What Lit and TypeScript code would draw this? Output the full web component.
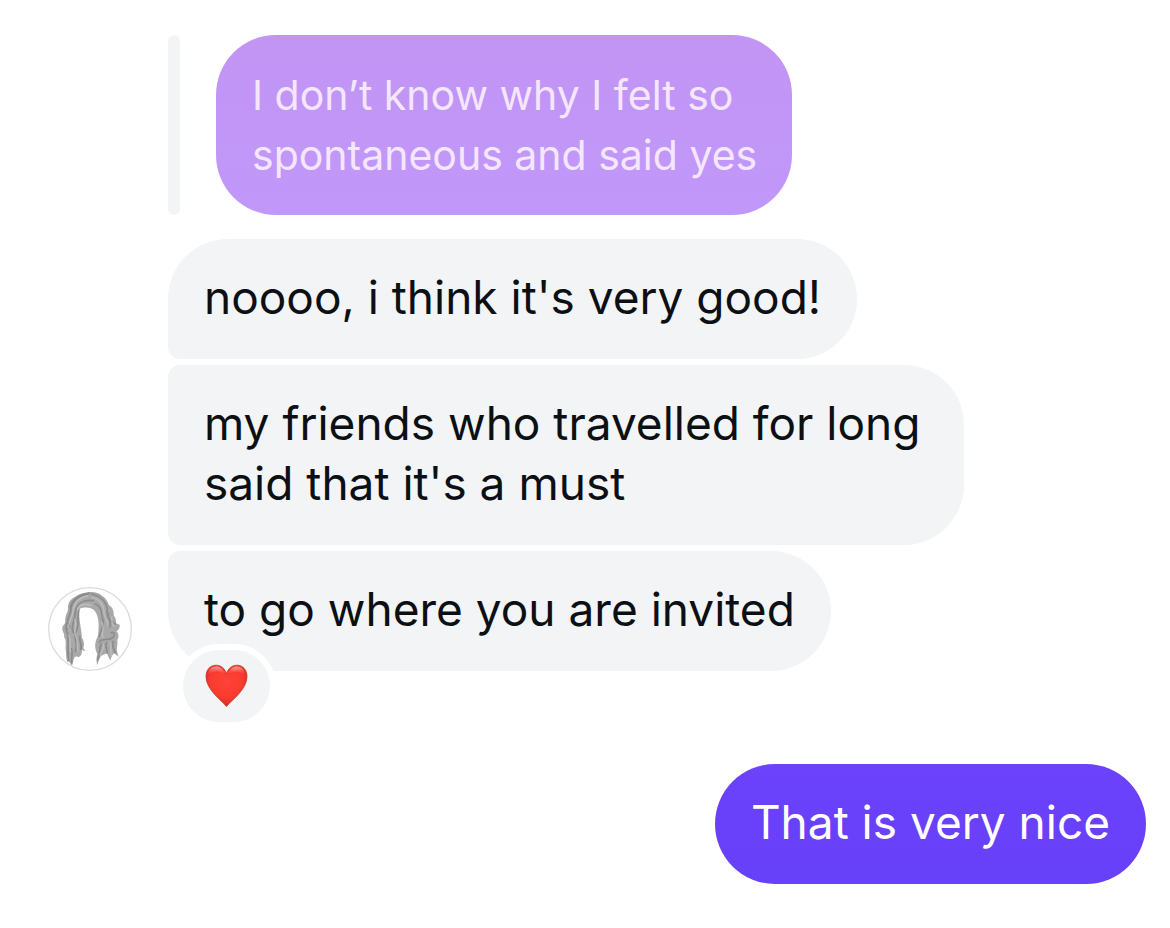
import { LitElement, html, css, svg } from "lit";
import { customElement, property } from "lit/decorators.js";

type Shape = "first" | "middle" | "last" | "single";

@customElement("chat-bubble")
class ChatBubble extends LitElement {
  @property({ reflect: true }) tone: "received" | "sent" | "quoted" = "received";
  @property({ reflect: true }) shape: Shape = "single";

  static styles = css`
    :host {
      display: block;
      box-sizing: border-box;
      position: relative;
      width: fit-content;
      padding: 28px 36px 32px;
      border-radius: 60px;
      font-size: 46px;
      line-height: 60px;
      color: #0c1014;
      background: #f2f4f6;
    }
    :host([shape="first"]) { border-bottom-left-radius: 12px; }
    :host([shape="middle"]) {
      border-top-left-radius: 12px;
      border-bottom-left-radius: 12px;
    }
    :host([shape="last"]) { border-top-left-radius: 12px; }
    :host([tone="sent"]) {
      color: #ffffff;
      background: linear-gradient(#6c42fc, #6740f9);
    }
    :host([tone="quoted"]) {
      padding: 30px 24px 30px 36px;
      font-size: 41px;
      color: #f4e6fd;
      background: linear-gradient(#c294f4, #c098fa);
    }
    .text { margin: 0; }
  `;

  render() {
    return html`<p class="text"><slot></slot></p><slot name="reaction"></slot>`;
  }
}

@customElement("heart-reaction")
class HeartReaction extends LitElement {
  static styles = css`
    :host {
      position: absolute;
      left: 9px;
      bottom: -57px;
    }
    .pill {
      display: flex;
      align-items: center;
      justify-content: center;
      width: 99px;
      height: 84px;
      padding: 0;
      border: 6px solid #ffffff;
      border-radius: 42px;
      background: #f2f4f6;
    }
    svg { width: 44px; height: 44px; }
  `;

  render() {
    return html`
      <button class="pill" type="button" aria-label="Heart reaction">
        <svg viewBox="0 0 44 44" aria-hidden="true">
          <defs>
            <radialGradient id="body" cx="0.5" cy="0.4" r="0.65">
              <stop offset="0" stop-color="#ff4338" />
              <stop offset="0.6" stop-color="#f93a2f" />
              <stop offset="1" stop-color="#cf281c" />
            </radialGradient>
            <linearGradient id="gloss" x1="0" y1="0" x2="0" y2="1">
              <stop offset="0" stop-color="#ffd2cc" stop-opacity="0.65" />
              <stop offset="1" stop-color="#ff7b70" stop-opacity="0" />
            </linearGradient>
          </defs>
          <path
            d="M21.500 42.500C17.500 37 1 26 1 12.500C1 5.500 5.500 1.200 11 1.200C16 1.200 20 4.500 21.500 9.800C23 4.500 27 1.200 32 1.200C37.500 1.200 42 5.500 42 12.500C42 26 25.500 37 21.500 42.500Z"
            fill="url(#body)" stroke="#c23a2c" stroke-width="0.8" />
          <path d="M3.200 11C3.200 5.500 6.500 2.500 11 2.500C15 2.500 18 5 19.500 9.500C14 6.500 8 6.500 3.200 11Z" fill="url(#gloss)" />
          <path d="M39.800 11C39.800 5.500 36.500 2.500 32 2.500C28 2.500 25 5 23.500 9.500C29 6.500 35 6.500 39.800 11Z" fill="url(#gloss)" />
        </svg>
      </button>
    `;
  }
}

const hairOutline =
  "M145 37C160 34 176 38 186 47C198 54 203 64 207 76C218 82 222 94 221 106C227 114 229 122 228 130L239 134C241 142 236 150 229 154C237 160 237 172 232 180C234 194 228 206 232 218L236 230L222 220C216 228 212 232 212 242C205 236 206 226 200 220C192 226 184 222 178 238L171 256C170 242 168 234 172 222C164 208 164 194 168 180C178 168 174 150 176 136C176 118 172 104 165 94C158 82 134 80 120 86C116 100 118 118 121 134C123 152 126 160 125 172C132 182 134 194 130 204L137 214L126 210C126 220 124 228 116 232C106 226 102 232 100 242L96 257C88 246 84 238 84 248C76 236 80 222 77 210C76 192 80 180 72 172C76 162 66 156 67 146C66 136 76 134 76 124C74 110 82 100 84 88C82 68 92 56 106 50C118 42 132 38 145 37Z";

const darkStrands = [
  "M146 40C112 46 94 62 92 92",
  "M92 92C88 118 72 134 80 154C90 172 80 196 86 246",
  "M160 62C130 58 110 70 106 96C106 122 90 140 100 158",
  "M116 92C112 118 118 140 108 154C98 170 116 190 106 214",
  "M154 42C186 50 198 64 202 86C196 106 216 122 210 140",
  "M166 72C186 78 184 102 188 118C196 138 180 154 178 170",
  "M178 186C186 172 204 184 216 174C226 168 226 154 214 158",
  "M206 100C198 114 214 124 226 132",
  "M200 188C192 198 206 210 200 222",
  "M184 192C176 206 182 222 172 240",
  "M220 184C214 198 222 208 226 218",
  "M84 128C92 142 88 150 78 146",
  "M120 168C114 184 130 194 122 208",
  "M94 206C100 220 92 236 96 250",
];

const lightStrands = [
  "M142 48C112 54 100 74 98 100C94 120 80 132 88 150",
  "M154 76C130 70 116 76 112 90",
  "M156 52C180 58 190 72 192 92C188 110 208 122 202 136",
  "M104 118C114 138 98 150 108 170C116 182 108 196 114 212",
  "M86 166C96 182 86 196 92 216",
  "M186 128C196 146 182 160 188 172",
  "M216 110C212 120 218 130 222 140",
  "M210 188C218 200 208 212 214 228",
  "M190 194C194 206 184 214 180 226",
];

@customElement("contact-avatar")
class ContactAvatar extends LitElement {
  static styles = css`
    :host { display: block; }
    svg { display: block; width: 84px; height: 84px; }
  `;

  render() {
    return html`
      <svg viewBox="24 21 252 252" role="img" aria-label="Contact avatar">
        <defs>
          <clipPath id="hair"><path d=${hairOutline} /></clipPath>
        </defs>
        <circle cx="150" cy="147" r="124" fill="#ffffff" stroke="#dcdcde" stroke-width="4" />
        <path fill="#a9a9a9" d=${hairOutline} />
        <g clip-path="url(#hair)" fill="none" stroke-linecap="round">
          <g stroke="#808080" stroke-width="5" opacity="0.7">
            ${darkStrands.map((d) => svg`<path d=${d} />`)}
          </g>
          <g stroke="#c8c8c8" stroke-width="4" opacity="0.7">
            ${lightStrands.map((d) => svg`<path d=${d} />`)}
          </g>
          <path d="M92 84C94 60 120 44 146 40" stroke="#8a8a8a" stroke-width="6" />
        </g>
      </svg>
    `;
  }
}

@customElement("app-root")
class AppRoot extends LitElement {
  static styles = css`
    :host {
      display: block;
      box-sizing: border-box;
      min-height: 100vh;
      padding: 35px 24px 44px 48px;
      background: #ffffff;
      font-family: Inter, "Liberation Sans", sans-serif;
    }
    .thread {
      display: flex;
      flex-direction: column;
      gap: 93px;
    }
    .incoming {
      display: flex;
      align-items: flex-end;
      gap: 36px;
    }
    contact-avatar { flex: none; }
    .stack {
      display: flex;
      flex-direction: column;
      align-items: flex-start;
      gap: 6px;
      flex: 1;
      min-width: 0;
    }
    .stack > chat-bubble { max-width: 68vw; }
    .quote {
      display: flex;
      gap: 36px;
      margin: 0 0 18px;
    }
    .bar {
      flex: none;
      width: 12px;
      border-radius: 6px;
      background: #f3f4f5;
    }
    .quote chat-bubble { max-width: 576px; }
    .outgoing {
      display: flex;
      justify-content: flex-end;
    }
  `;

  render() {
    return html`
      <main class="thread">
        <section class="incoming">
          <contact-avatar></contact-avatar>
          <div class="stack">
            <blockquote class="quote">
              <span class="bar"></span>
              <chat-bubble tone="quoted">I don’t know why I felt so spontaneous and said yes</chat-bubble>
            </blockquote>
            <chat-bubble shape="first">noooo, i think it's very good!</chat-bubble>
            <chat-bubble shape="middle">my friends who travelled for long said that it's a must</chat-bubble>
            <chat-bubble shape="last">to go where you are invited<heart-reaction slot="reaction"></heart-reaction></chat-bubble>
          </div>
        </section>
        <section class="outgoing">
          <chat-bubble tone="sent">That is very nice</chat-bubble>
        </section>
      </main>
    `;
  }
}
